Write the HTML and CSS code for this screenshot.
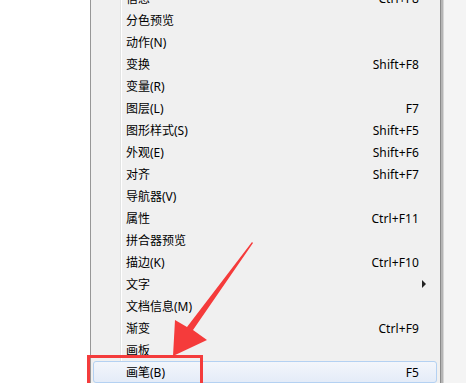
FILE: index.html
```html
<!DOCTYPE html>
<html lang="zh-CN">
<head>
	<meta charset="UTF-8" />
	<title>窗口菜单</title>
	<link rel="stylesheet" href="styles.css">
</head>
<body>
	<div class="blank"></div>

	<div class="menu">
		<ul class="items">
			<li><span>信息</span><span class="key">Ctrl+F8</span></li>
			<li><span>分色预览</span></li>
			<li><span>动作(N)</span></li>
			<li><span>变换</span><span class="key">Shift+F8</span></li>
			<li><span>变量(R)</span></li>
			<li><span>图层(L)</span><span class="key">F7</span></li>
			<li><span>图形样式(S)</span><span class="key">Shift+F5</span></li>
			<li><span>外观(E)</span><span class="key">Shift+F6</span></li>
			<li><span>对齐</span><span class="key">Shift+F7</span></li>
			<li><span>导航器(V)</span></li>
			<li><span>属性</span><span class="key">Ctrl+F11</span></li>
			<li><span>拼合器预览</span></li>
			<li><span>描边(K)</span><span class="key">Ctrl+F10</span></li>
			<li><span>文字</span><span class="sub"></span></li>
			<li><span>文档信息(M)</span></li>
			<li><span>渐变</span><span class="key">Ctrl+F9</span></li>
			<li><span>画板</span></li>
			<li class="active"><span>画笔(B)</span><span class="key">F5</span></li>
		</ul>
	</div>

	<div class="outside"></div>

	<!-- annotation drawn over the screenshot -->
	<div class="mark"></div>
	<svg class="arrow" width="466" height="383" viewBox="0 0 466 383">
		<path d="M252 242 L253 243 L193 330 L207 340 L173 356 L175 320 L187 327 Z" fill="#f53b3b" />
	</svg>
</body>
</html>
```

FILE: styles.css
```css
body {
	margin: 0;
	height: 383px;
	display: flex;
	overflow: hidden;
	background: #ffffff;
	font-family: "Noto Sans", "Noto Sans CJK SC", sans-serif;
	font-size: 12px;
	color: #000;
}

.blank {
	width: 90px;
	background: #fff;
}

.menu {
	width: 349px;
	border-left: 1px solid #979797;
	border-right: 1px solid #8a8a8a;
	box-shadow: 2px 0 0 #b5b5b5, 3px 0 0 #d6d6d6;
	background-color: #f0f0f0;
	/* icon gutter separator */
	background-image: linear-gradient(to right, transparent 29px, #e2e3e3 29px, #e2e3e3 30px, #ffffff 30px, #ffffff 31px, transparent 31px);
}

.outside {
	flex: 1;
	margin-left: 3px;
	background: #f4f4f4;
}

.items {
	list-style: none;
	margin: -13px 0 0;
	padding: 0;
}

.items li {
	height: 22px;
	margin: 0 3px 0 2px;
	padding: 0 17px 0 32px;
	display: flex;
	align-items: center;
	justify-content: space-between;
	box-sizing: border-box;
	border: 1px solid transparent;
	border-radius: 3px;
}

.items li.active {
	border-color: #b4d1f2;
	background: linear-gradient(#f3f6fb, #e4ecf8);
}

.key {
	letter-spacing: 0.1px;
}

.sub {
	width: 0;
	height: 0;
	margin-right: -7px;
	border-top: 4px solid transparent;
	border-bottom: 4px solid transparent;
	border-left: 4px solid #222;
}

.mark {
	position: absolute;
	left: 87px;
	top: 355px;
	width: 110px;
	height: 40px;
	border: 3px solid #f43c3c;
}

.arrow {
	position: absolute;
	left: 0;
	top: 0;
}
```
